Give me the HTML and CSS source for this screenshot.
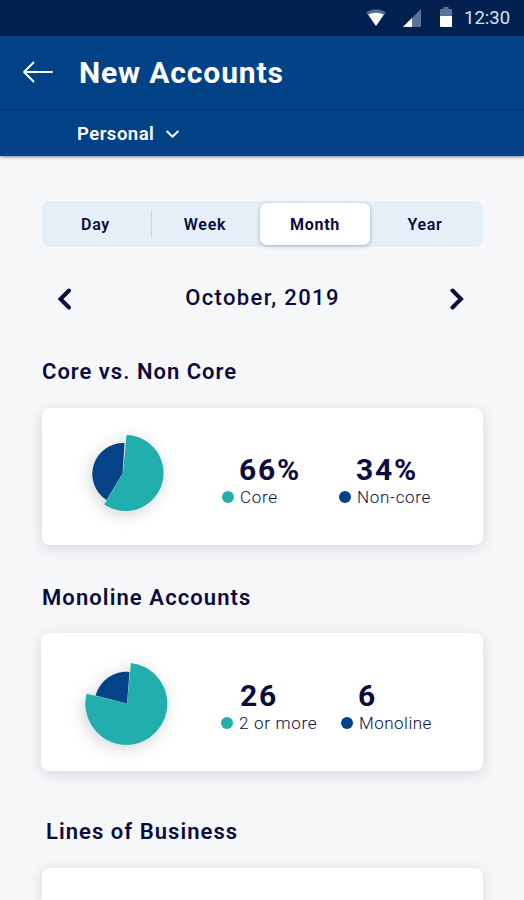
FILE: index.html
```html
<!DOCTYPE html>
<html lang="en">
<head>
<meta charset="utf-8">
<title>New Accounts</title>
<link rel="stylesheet" href="styles.css">
</head>
<body>
<div class="statusbar">
  <svg class="wifi" width="20" height="18" viewBox="0 0 20 18"><path d="M0 3.2Q10-2.8 20 3.2L10 17z" fill="#526b91"/><path d="M2.2 5.5Q10 1.8 17.8 5.5L10 17z" fill="#fff"/></svg>
  <svg class="signal" width="18" height="18" viewBox="0 0 18 18"><path d="M0 18L18 0V18z" fill="#5c7397"/><path d="M0 18L9 9V18z" fill="#fff"/></svg>
  <svg class="battery" width="12" height="20" viewBox="0 0 12 20"><path d="M1 2H3.5V0H8.500V2H11Q12 2 12 3V10H0V3Q0 2 1 2z" fill="#5c7397"/><path d="M0 9H12V19Q12 20 11 20H1Q0 20 0 19z" fill="#fff"/></svg>
  <span class="time">12:30</span>
</div>
<header class="appbar">
  <svg class="back" width="32" height="22" viewBox="0 0 32 22" fill="none" stroke="#fff" stroke-width="1.8" stroke-linecap="round" stroke-linejoin="round"><path d="M11.500 1.500L2 11L11.500 20.500M2 11H30"/></svg>
  <h1>New Accounts</h1>
</header>
<div class="filter">
  <span>Personal</span>
  <svg width="13" height="9" viewBox="0 0 13 9" fill="none" stroke="#fff" stroke-width="2" stroke-linecap="round" stroke-linejoin="round"><path d="M1.200 1.500L6.500 6.700L11.800 1.500"/></svg>
</div>
<main>
  <nav class="tabs">
    <span class="tab day">Day</span><span class="tab week">Week</span><span class="tab active">Month</span><span class="tab year">Year</span>
  </nav>
  <div class="period">
    <svg width="14" height="22" viewBox="0 0 14 22" fill="none" stroke="#0b0b40" stroke-width="4" stroke-linecap="round"><path d="M12 2.500L3.500 11L12 19.500"/></svg>
    <span>October, 2019</span>
    <svg width="14" height="22" viewBox="0 0 14 22" fill="none" stroke="#0b0b40" stroke-width="4" stroke-linecap="round"><path d="M2.500 2.500L11 11L2.500 19.500"/></svg>
  </div>
  <h2 class="core-title">Core vs. Non Core</h2>
  <section class="card core-card">
    <svg class="pie" width="180" height="137" viewBox="43 408.500 180 137"><g class="slices"><path d="M123.500 474L125.500 443.500A31 31 0 0 0 107.600 500.600z" fill="#064287"/><path d="M124 473.500L127.500 435.500A38 38 0 1 1 105.300 505z" fill="#22aeac"/></g></svg>
    <div class="stat first"><strong>66%</strong><span class="label"><i class="dot teal"></i><span class="name">Core</span></span></div>
    <div class="stat second"><strong>34%</strong><span class="label"><i class="dot navy"></i><span class="name">Non-core</span></span></div>
  </section>
  <h2 class="mono-title">Monoline Accounts</h2>
  <section class="card mono-card">
    <svg class="pie" width="180" height="138" viewBox="42 633 180 138"><g class="slices"><path d="M127 703.500L129.500 672A32 32 0 0 0 95.500 695.500z" fill="#064287"/><path d="M127 703.500L131 663A41 41 0 1 1 86.600 693.700z" fill="#22aeac"/></g></svg>
    <div class="stat first"><strong>26</strong><span class="label"><i class="dot teal"></i><span class="name">2 or more</span></span></div>
    <div class="stat second"><strong>6</strong><span class="label"><i class="dot navy"></i><span class="name">Monoline</span></span></div>
  </section>
  <h2 class="lines-title">Lines of Business</h2>
  <section class="card lines-card"></section>
</main>
</body>
</html>
```
FILE: styles.css
```css
* { box-sizing: border-box; }
body { margin: 0; height: 900px; overflow: hidden; display: flex; flex-direction: column; background: #f5f7f9; color: #0b0b40; font-family: Roboto, sans-serif; }
svg { display: block; flex: none; }
h1, h2 { margin: 0; white-space: nowrap; }
.statusbar { flex: none; height: 36px; background: #022050; display: flex; align-items: center; padding-left: 366px; color: #dce2ed; }
.signal { margin-left: 17px; }
.battery { margin-left: 19px; margin-top: -2px; }
.time { margin-left: 12px; font-size: 18.5px; line-height: 36px; }
.appbar { flex: none; height: 75px; background: #034287; border-bottom: 2px solid #033c7c; display: flex; align-items: center; padding-left: 22px; color: #fff; }
.back { margin-top: -2px; }
.appbar h1 { margin-left: 25px; font-size: 30px; font-weight: 700; line-height: 36px; letter-spacing: .87px; }
.filter { flex: none; height: 45px; background: #034287; display: flex; align-items: center; padding-left: 77px; color: #fff; font-size: 18.5px; font-weight: 600; letter-spacing: .5px; box-shadow: 0 1px 3px rgba(0,20,50,.5); }
.filter svg { margin-left: 12px; margin-top: 2px; }
main { flex: 1; min-height: 0; display: flex; flex-direction: column; padding: 45px 41px 0 42px; }
.tabs { flex: none; height: 46px; border-radius: 8px; background: #e6eef7; display: grid; grid-template-columns: 110px 108px 110px 1fr; align-items: center; font-size: 16px; font-weight: 600; letter-spacing: .7px; text-align: center; }
.tab { height: 26px; line-height: 28px; }
.day { border-right: 1px solid #ced7e1; padding-right: 2px; }
.week { padding-right: 2px; }
.active { height: 42px; line-height: 43px; border-radius: 7px; background: #fff; font-weight: 700; box-shadow: 0 1px 4px rgba(10,25,60,.3); }
.year { padding-right: 3px; }
.period { flex: none; height: 26px; margin-top: 39px; padding: 0 19px 0 15px; display: flex; justify-content: space-between; align-items: center; font-size: 22px; font-weight: 500; letter-spacing: 1.35px; }
.period span { line-height: 24px; margin: -3px 0 0 4px; }
h2 { flex: none; font-size: 22px; font-weight: 600; line-height: 26px; letter-spacing: 1.1px; }
.core-title { margin-top: 47px; letter-spacing: 1px; }
.card { flex: none; background: #fff; border-radius: 8px; display: flex; box-shadow: 0 3px 14px rgba(20,30,50,.14); }
.core-card { height: 137px; margin-top: 23px; }
.mono-title { margin-top: 40px; }
.mono-card { height: 138px; margin-top: 22px; margin-left: -1px; }
.lines-title { margin-top: 48px; padding-left: 4px; letter-spacing: 1.05px; }
.lines-card { flex: 1; min-height: 0; margin-top: 23px; border-radius: 8px 8px 0 0; }
.slices { filter: drop-shadow(-2px 3px 8px rgba(20,30,50,.2)); }
.mono-card .slices { transform: translateX(1px); }
.stat { padding-top: 47px; }
.mono-card .stat { padding-top: 48px; }
.first { width: 117px; }
.mono-card .first { width: 120px; }
.stat strong { display: block; height: 30px; padding-left: 17px; font-size: 30px; line-height: 30px; font-weight: 700; letter-spacing: 1.8px; }
.mono-card strong { padding-left: 19px; }
.mono-card .second strong { padding-left: 17px; }
.label { display: flex; align-items: center; height: 24px; font-size: 17px; font-weight: 300; letter-spacing: .7px; white-space: nowrap; }
.mono-card .second .label { letter-spacing: .5px; }
.dot { width: 12px; height: 12px; border-radius: 50%; margin-right: 6px; flex: none; }
.teal { background: #22aeac; }
.navy { background: #064287; }
```
